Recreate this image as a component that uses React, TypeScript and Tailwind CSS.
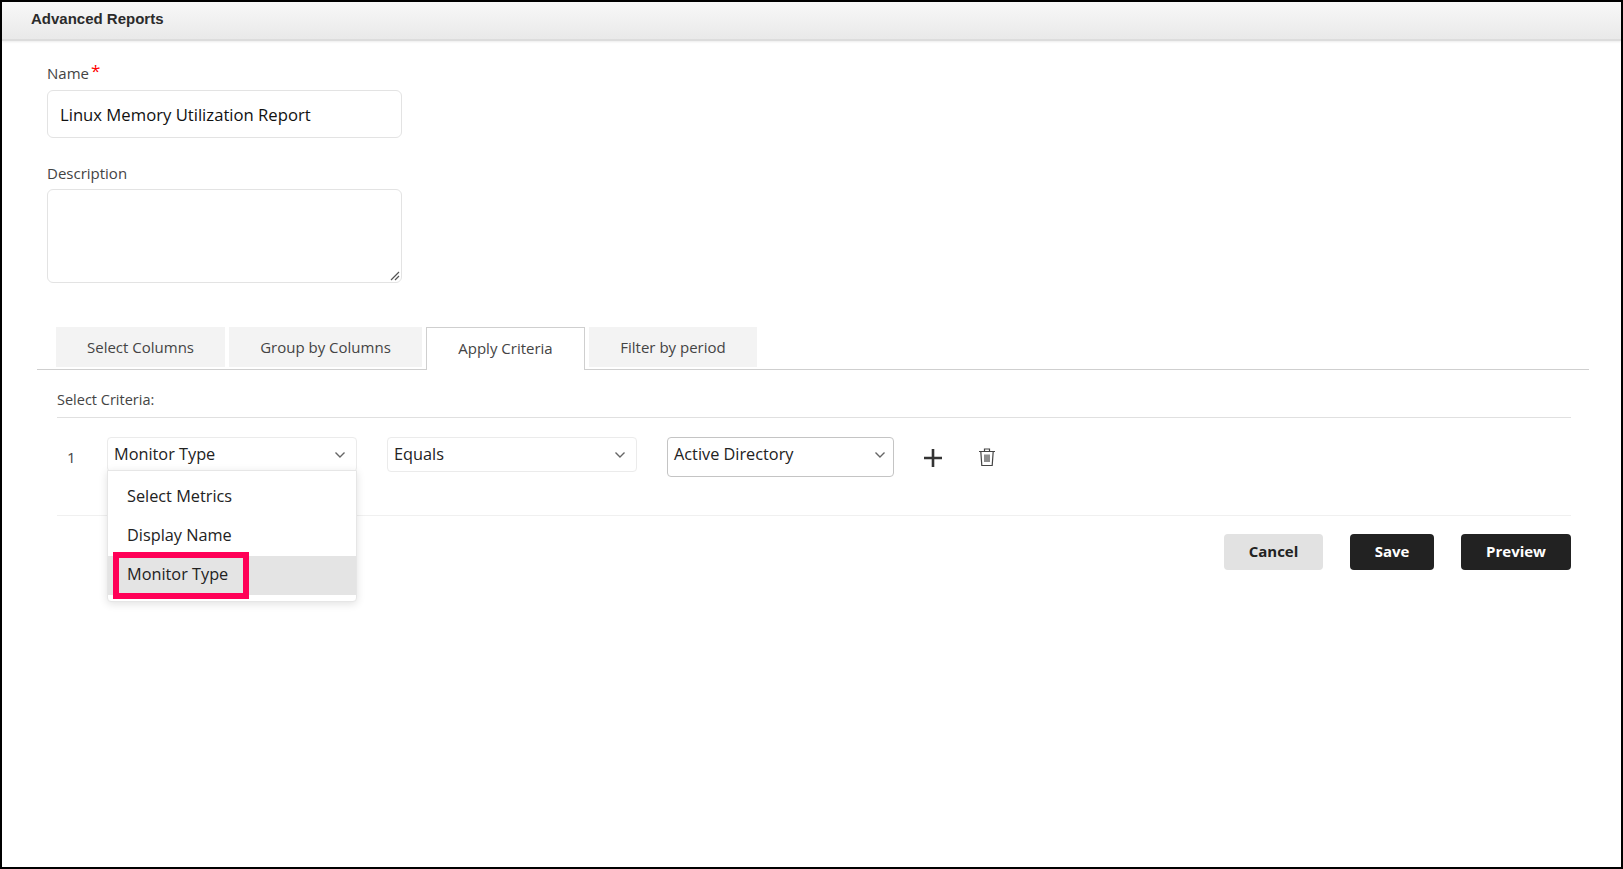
import React from "react";

const font = { fontFamily: '"Open Sans", sans-serif' };

function Chevron() {
  return (
    <svg width="12" height="8" viewBox="0 0 12 8" fill="none" className="mt-[9px] shrink-0">
      <path d="M1.5 1.5 L6 6 L10.5 1.5" stroke="#666" strokeWidth="1.4" />
    </svg>
  );
}

function Select({ label, className }: { label: string; className: string }) {
  return (
    <div className={`flex items-start justify-between rounded-[4px] border pl-[6px] pt-[4px] text-[16.3px] leading-[24px] text-[#222] ${className}`}>
      <span>{label}</span>
      <Chevron />
    </div>
  );
}

export default function App() {
  return (
    <div className="box-border flex h-[869px] w-[1623px] flex-col border-2 border-black bg-white text-[#333]" style={font}>
      <div className="flex h-[39px] shrink-0 items-start border-b-2 border-[#dcdcdc] bg-gradient-to-b from-[#f8f8f8] to-[#e9e9e9] pl-[29px] pt-[9px] text-[15px] font-bold leading-[16px] text-[#2b2b2b] shadow-[0_1px_2px_rgba(0,0,0,0.08)] [font-family:'Liberation_Sans',sans-serif]">
        Advanced Reports
      </div>

      <div className="flex flex-col pl-[45px] pt-[22px]">
        <label className="flex h-[27px] items-start text-[15px] leading-[20px] text-[#444]">
          Name<span className="ml-[2px] text-[17px] leading-[16px] text-[#f00]">*</span>
        </label>
        <div className="flex h-[48px] w-[355px] items-start rounded-[6px] border border-[#e3e3e3] pl-[12px] pt-[12px] text-[16.67px] leading-[24px] text-[#111]">
          Linux Memory Utilization Report
        </div>
        <label className="mt-[25px] h-[26px] text-[15px] leading-[20px] text-[#444]">Description</label>
        <div className="relative h-[94px] w-[355px] rounded-[6px] border border-[#e3e3e3]">
          <svg width="10" height="10" viewBox="0 0 10 10" className="absolute bottom-[1px] right-[1px]">
            <path d="M1 9 L9 1 M5 9 L9 5" stroke="#555" strokeWidth="1.2" />
          </svg>
        </div>
      </div>

      <div className="ml-[35px] mr-[32px] mt-[44px] flex h-[43px] items-start gap-[4px] border-b border-[#cfcfcf] pl-[19px] text-[15px] text-[#444]">
        <div className="flex h-[40px] w-[169px] items-center justify-center bg-[#f3f3f3]">Select Columns</div>
        <div className="flex h-[40px] w-[193px] items-center justify-center bg-[#f3f3f3]">Group by Columns</div>
        <div className="z-10 flex h-[43px] w-[159px] items-center justify-center border border-b-0 border-[#cfcfcf] bg-white pb-[2px]">Apply Criteria</div>
        <div className="flex h-[40px] w-[168px] items-center justify-center bg-[#f3f3f3]">Filter by period</div>
      </div>

      <div className="ml-[55px] mr-[50px] flex flex-col">
        <div className="flex h-[48px] items-center border-b border-[#e0e0e0] pt-[12px] text-[14.5px] text-[#444]">Select Criteria:</div>
        <div className="flex h-[98px] items-start border-b border-[#f0f0f0] pt-[19px]">
          <span className="mt-[9px] w-[50px] pl-[10px] text-[15px] text-[#444]">1</span>
          <div className="relative">
            <Select label="Monitor Type" className="h-[35px] w-[250px] border-[#ebebeb] pr-[10px]" />
            <div className="absolute left-0 top-[33px] z-20 flex h-[132px] w-[250px] flex-col rounded-b-[4px] border border-[#e6e6e6] bg-white pt-[6px] text-[16.3px] text-[#222] shadow-[0_2px_8px_rgba(0,0,0,0.12)]">
              <div className="flex h-[39px] shrink-0 items-center pl-[19px]">Select Metrics</div>
              <div className="flex h-[39px] shrink-0 items-center pl-[19px]">Display Name</div>
              <div className="mt-[1px] flex h-[39px] shrink-0 items-center bg-[#e4e4e4] pb-[2px] pl-[19px]">Monitor Type</div>
              <div className="absolute left-[5px] top-[81px] h-[47px] w-[136px] border-[6px] border-[#ff0057]" />
            </div>
          </div>
          <Select label="Equals" className="ml-[30px] h-[35px] w-[250px] border-[#ebebeb] pr-[10px]" />
          <Select label="Active Directory" className="ml-[30px] h-[40px] w-[227px] border-[#c4c4c4] pr-[7px]" />
          <svg width="20" height="20" viewBox="0 0 20 20" className="ml-[29px] mt-[11px]">
            <path d="M10 1 V19 M1 10 H19" stroke="#333" strokeWidth="2.6" />
          </svg>
          <svg width="18" height="20" viewBox="0 0 18 20" fill="none" stroke="#444" strokeWidth="1.2" className="ml-[35px] mt-[10px]">
            <path d="M1 4.5 H17 M6.5 4.5 V2 H11.5 V4.5 M2.8 4.5 L3.8 18.5 H14.2 L15.2 4.5 M7 7.5 V15 M9 7.5 V15 M11 7.5 V15" />
          </svg>
        </div>
        <div className="mt-[18px] flex justify-end gap-[27px] text-[15px] font-bold">
          <button className="h-[36px] w-[99px] rounded-[4px] bg-[#e2e2e2] pb-[1px] text-[#222]">Cancel</button>
          <button className="h-[36px] w-[84px] rounded-[4px] bg-[#222] pb-[1px] text-white">Save</button>
          <button className="h-[36px] w-[110px] rounded-[4px] bg-[#222] pb-[1px] text-white">Preview</button>
        </div>
      </div>
    </div>
  );
}
